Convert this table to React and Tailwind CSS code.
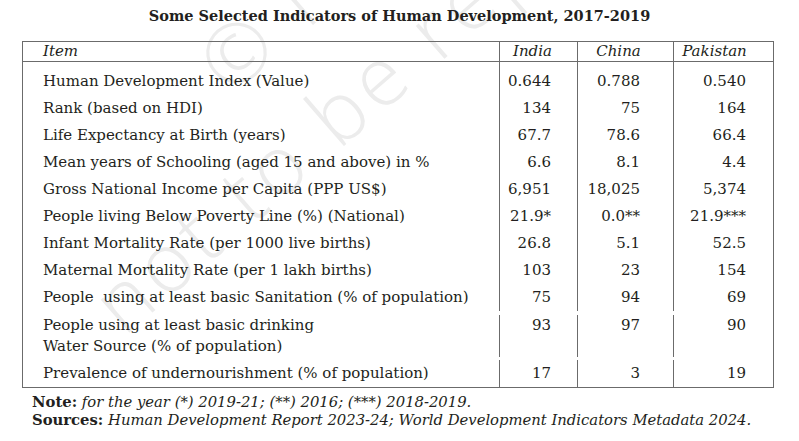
const rows = [
  ["Human Development Index (Value)", "0.644", "0.788", "0.540"],
  ["Rank (based on HDI)", "134", "75", "164"],
  ["Life Expectancy at Birth (years)", "67.7", "78.6", "66.4"],
  ["Mean years of Schooling (aged 15 and above) in %", "6.6", "8.1", "4.4"],
  ["Gross National Income per Capita (PPP US$)", "6,951", "18,025", "5,374"],
  ["People living Below Poverty Line (%) (National)", "21.9*", "0.0**", "21.9***"],
  ["Infant Mortality Rate (per 1000 live births)", "26.8", "5.1", "52.5"],
  ["Maternal Mortality Rate (per 1 lakh births)", "103", "23", "154"],
  ["People\u00a0 using at least basic Sanitation (% of population)", "75", "94", "69"],
];

const Row = ({ item, a, b, c, className = "" }) => (
  <div className={"grid grid-cols-[476px_78px_96px_102px] " + className}>
    <div className="pl-[20px]">{item}</div>
    <div className="border-l border-[#6b6b6b] text-right pr-[26px]">{a}</div>
    <div className="border-l border-[#6b6b6b] text-right pr-[33px]">{b}</div>
    <div className="border-l border-[#6b6b6b] text-right pr-[29px]">{c}</div>
  </div>
);

const wm =
  "absolute -rotate-[41deg] origin-bottom-left pointer-events-none select-none text-[#ececec] font-['Open_Sans',sans-serif] font-light text-[82px] leading-none tracking-[6px] whitespace-nowrap";

export default function App() {
  return (
    <div className="relative w-[799px] h-[441px] bg-white overflow-hidden text-[#231f20] font-['DejaVu_Serif',serif]">
      {/* watermark */}
      <div aria-hidden="true" className={wm + " left-[236px] top-[22px]"}>© NCERT</div>
      <div aria-hidden="true" className={wm + " left-[130px] top-[262px]"}>not to be republished</div>

      <div className="relative">
        <h1 className="text-center font-bold text-[14.5px] leading-[20px] pt-[6px]">
          Some Selected Indicators of Human Development, 2017-2019
        </h1>

        <div className="ml-[22px] mt-[15px] w-[752px] border border-[#6b6b6b] text-[15px]">
          <div className="grid grid-cols-[476px_78px_96px_102px] italic leading-[19px] border-b border-[#6b6b6b]">
            <div className="pl-[20px]">Item</div>
            <div className="border-l border-[#6b6b6b] text-center pr-[12px]">India</div>
            <div className="border-l border-[#6b6b6b] text-center pr-[14px]">China</div>
            <div className="border-l border-[#6b6b6b] text-center pr-[20px]">Pakistan</div>
          </div>
          <div className="leading-[27px]">
            <Row item="" a="" b="" c="" className="h-[6px]" />
            {rows.map((r) => (
              <Row key={r[0]} item={r[0]} a={r[1]} b={r[2]} c={r[3]} />
            ))}
            <Row
              className="leading-[21px] pt-[4px] pb-[3px]"
              item={
                <>
                  <div>People using at least basic drinking</div>
                  <div>Water Source (% of population)</div>
                </>
              }
              a="93"
              b="97"
              c="90"
            />
            <Row item="Prevalence of undernourishment (% of population)" a="17" b="3" c="19" />
          </div>
        </div>

        <div className="pl-[32px] pt-[5px] text-[14.8px] leading-[18px]">
          <div>
            <span className="font-bold">Note:</span> <span className="italic">for the year (*) 2019-21; (**) 2016; (***) 2018-2019.</span>
          </div>
          <div>
            <span className="font-bold">Sources:</span>{" "}
            <span className="italic">Human Development Report 2023-24; World Development Indicators Metadata 2024.</span>
          </div>
        </div>
      </div>
    </div>
  );
}
